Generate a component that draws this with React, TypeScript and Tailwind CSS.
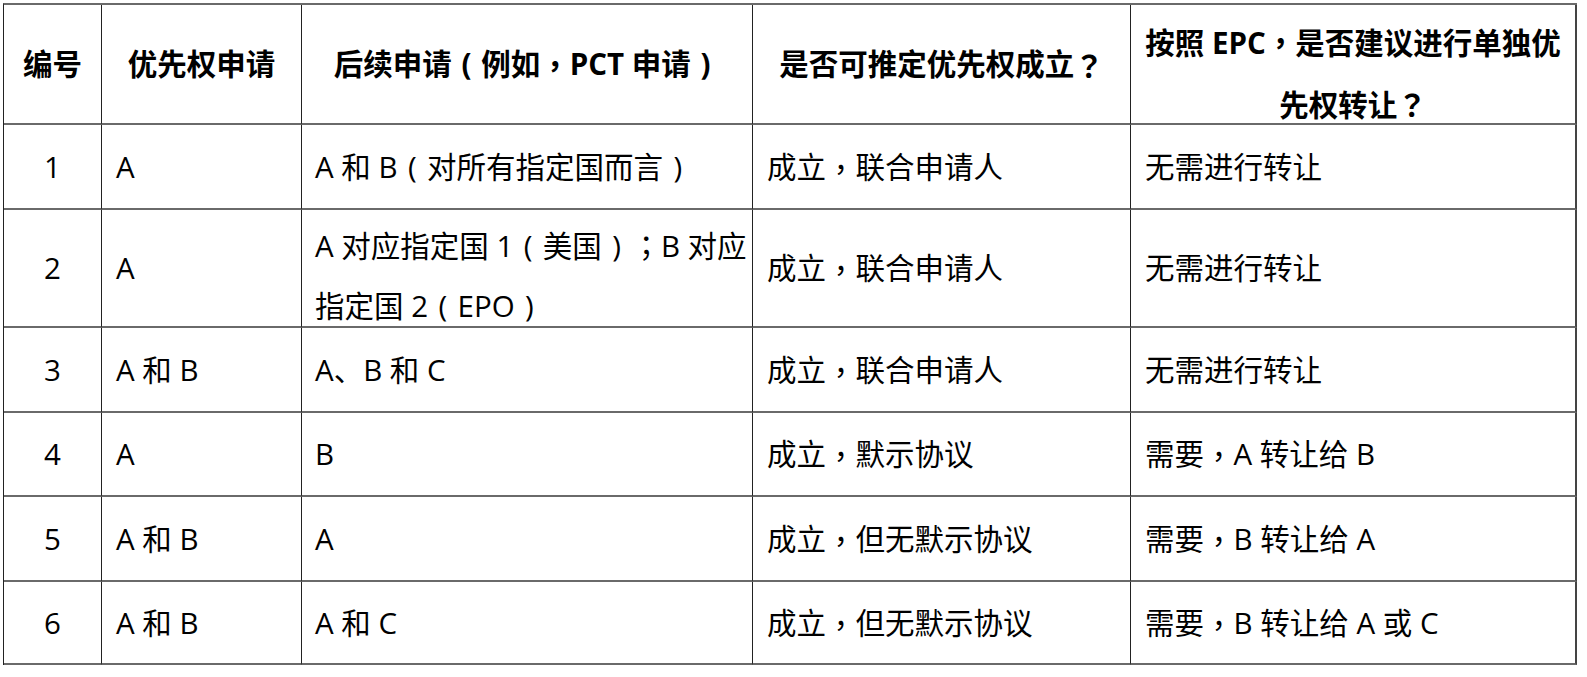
import React from "react";

function P({ t }: { t: string }) {
  const parts = t.split(/([（），；？])/);
  return (
    <>
      {parts.map((p, i) => {
        if (p === "（" || p === "）") {
          return (
            <span key={i} className="inline-block w-[1em] text-center">
              {p === "（" ? "(" : ")"}
            </span>
          );
        }
        if (/^[，；？]$/.test(p)) {
          return (
            <span key={i} className="font-['Noto_Sans_CJK_TC',sans-serif]">
              {p}
            </span>
          );
        }
        return <React.Fragment key={i}>{p}</React.Fragment>;
      })}
    </>
  );
}

type Row = {
  no: string;
  pri: string;
  later: string[];
  est: string;
  epc: string;
};

const rows: Row[] = [
  { no: "1", pri: "A", later: ["A 和 B（对所有指定国而言）"], est: "成立，联合申请人", epc: "无需进行转让" },
  {
    no: "2",
    pri: "A",
    later: ["A 对应指定国 1（美国）；B 对应", "指定国 2（EPO）"],
    est: "成立，联合申请人",
    epc: "无需进行转让",
  },
  { no: "3", pri: "A 和 B", later: ["A、B 和 C"], est: "成立，联合申请人", epc: "无需进行转让" },
  { no: "4", pri: "A", later: ["B"], est: "成立，默示协议", epc: "需要，A 转让给 B" },
  { no: "5", pri: "A 和 B", later: ["A"], est: "成立，但无默示协议", epc: "需要，B 转让给 A" },
  { no: "6", pri: "A 和 B", later: ["A 和 C"], est: "成立，但无默示协议", epc: "需要，B 转让给 A 或 C" },
];

const cell =
  "flex items-center whitespace-nowrap border-b-2 border-b-[#6a6a6a] border-r border-r-[#222]";
const lastCell =
  "flex items-center whitespace-nowrap border-b-2 border-b-[#6a6a6a] border-r-2 border-r-[#444]";

export default function App() {
  return (
    <div className="w-[1587px] h-[677px] bg-white overflow-hidden font-['Open_Sans','Noto_Sans_CJK_SC',sans-serif] text-[29.5px] leading-[60px] text-black">
      <div className="ml-[3px] mt-[3px] w-[1574px] grid grid-cols-[98px_200px_451px_378px_446px] grid-rows-[120px_85px_118px_85px_84px_85px_83px] border-t-2 border-t-[#6a6a6a] border-l border-l-[#222]">
        {/* header */}
        <div className={`${cell} justify-center font-bold`}>编号</div>
        <div className={`${cell} justify-center font-bold`}>优先权申请</div>
        <div className={`${cell} justify-center font-bold`}>
          <P t="后续申请（例如，PCT 申请）" />
        </div>
        <div className={`${cell} justify-center font-bold`}>
          <P t="是否可推定优先权成立？" />
        </div>
        <div className={`${lastCell} !items-start justify-center pt-[6px] text-center font-bold`}>
          <div>
            <P t="按照 EPC，是否建议进行单独优" />
            <br />
            <P t="先权转让？" />
          </div>
        </div>

        {rows.map((r) => (
          <React.Fragment key={r.no}>
            <div className={`${cell} justify-center`}>{r.no}</div>
            <div className={`${cell} pl-[14px]`}>{r.pri}</div>
            {r.later.length > 1 ? (
              <div className={`${cell} !items-start pl-[13px] pt-[4px]`}>
                <div>
                  <P t={r.later[0]} />
                  <br />
                  <P t={r.later[1]} />
                </div>
              </div>
            ) : (
              <div className={`${cell} pl-[13px]`}>
                <P t={r.later[0]} />
              </div>
            )}
            <div className={`${cell} pl-[14px]`}>
              <P t={r.est} />
            </div>
            <div className={`${lastCell} pl-[14px]`}>
              <P t={r.epc} />
            </div>
          </React.Fragment>
        ))}
      </div>
    </div>
  );
}
